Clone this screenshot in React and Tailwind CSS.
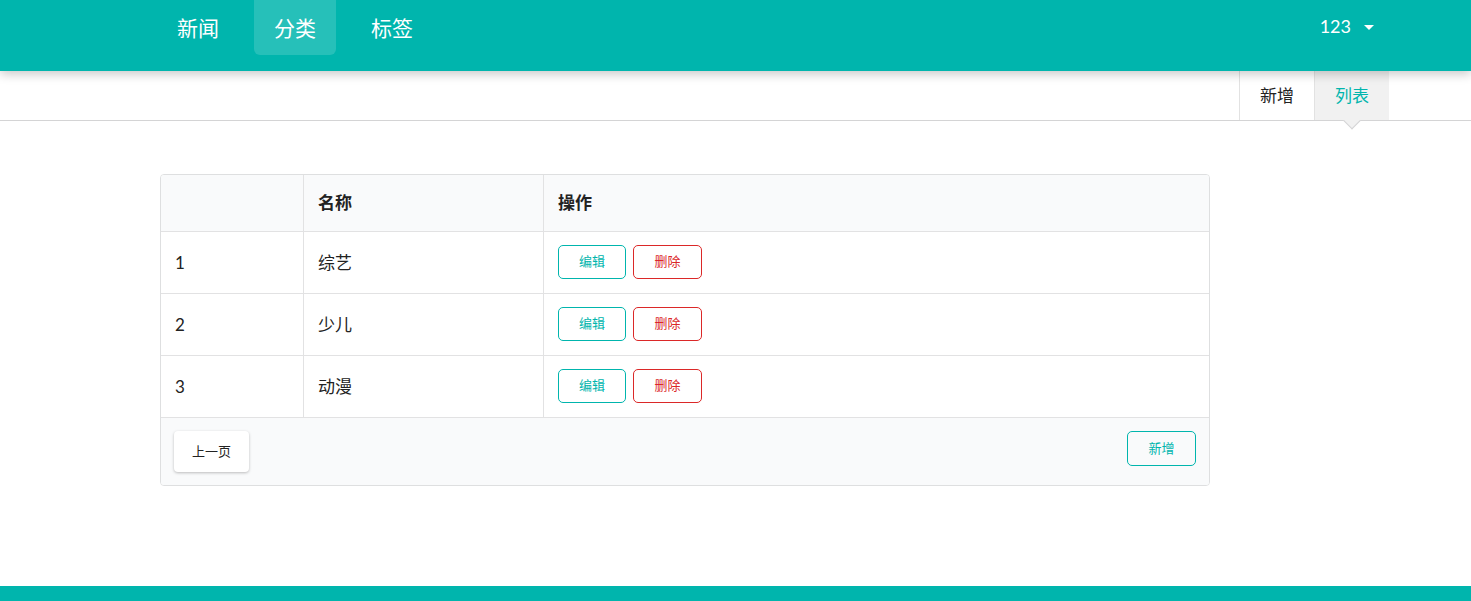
import React from "react";

const font = { fontFamily: 'Lato, "Noto Sans CJK SC", "Helvetica Neue", Arial, sans-serif' };

const rows = [
  { id: 1, name: "综艺" },
  { id: 2, name: "少儿" },
  { id: 3, name: "动漫" },
];

const App = () => {
  return (
    <div className="min-h-[601px] flex flex-col bg-white text-[#222]" style={font}>
      {/* top navbar */}
      <div className="relative z-10 h-[71px] bg-[#00b5ad] shadow-[0_3px_10px_rgba(0,0,0,0.22)] flex items-start">
        <div className="flex gap-[15px] pl-[157px]">
          <a className="w-[82px] h-[55px] flex items-center justify-center text-white text-[21px]">新闻</a>
          <a className="w-[82px] h-[55px] flex items-center justify-center text-white text-[21px] bg-white/15 rounded-b-[6px]">分类</a>
          <a className="w-[82px] h-[55px] flex items-center justify-center text-white text-[21px]">标签</a>
        </div>
        <div className="ml-auto mr-[97px] h-[52px] flex items-center gap-[13px] text-white text-[18px]">
          <span>123</span>
          <span className="w-0 h-0 border-l-[5px] border-r-[5px] border-t-[5px] border-l-transparent border-r-transparent border-t-white mt-[2px]" />
        </div>
      </div>

      {/* secondary menu */}
      <div className="h-[50px] border-b border-[#d4d4d5] flex justify-end pr-[82px]">
        <a className="w-[75px] flex items-center justify-center border-l border-[#e2e2e2] text-[17px] text-[#222]">新增</a>
        <a className="relative w-[75px] flex items-center justify-center bg-[#f1f1f1] border-l border-[#e2e2e2] text-[17px] text-[#00b5ad]">
          列表
          <span className="absolute left-1/2 -bottom-[7px] -ml-[6px] w-[12px] h-[12px] rotate-45 bg-[#f1f1f1] border-r border-b border-[#d4d4d5]" />
        </a>
      </div>

      {/* table */}
      <div className="pl-[160px] mt-[53px]">
        <div className="w-[1050px] border border-[#dedfe0] rounded-[4px] overflow-hidden">
          <div className="grid grid-cols-[143px_240px_1fr] bg-[#f9fafb] h-[57px] border-b border-[#e2e2e3] text-[17px] font-bold">
            <div className="border-r border-[#e2e2e3]" />
            <div className="border-r border-[#e2e2e3] flex items-center pl-[14px]">名称</div>
            <div className="flex items-center pl-[14px]">操作</div>
          </div>
          {rows.map((r) => (
            <div key={r.id} className="grid grid-cols-[143px_240px_1fr] h-[62px] border-b border-[#e2e2e3] text-[17px]">
              <div className="border-r border-[#e2e2e3] flex items-center pl-[14px] text-[17px]">{r.id}</div>
              <div className="border-r border-[#e2e2e3] flex items-center pl-[14px]">{r.name}</div>
              <div className="flex items-center pl-[14px] gap-[7px] pb-[1px]">
                <button className="w-[68px] h-[34px] border border-[#00b5ad] rounded-[5px] text-[13px] text-[#00b5ad] bg-white">编辑</button>
                <button className="w-[69px] h-[34px] border border-[#db2828] rounded-[5px] text-[13px] text-[#db2828] bg-white">删除</button>
              </div>
            </div>
          ))}
          <div className="bg-[#f9fafb] h-[67px] flex items-start justify-between pt-[13px] px-[13px]">
            <button className="w-[75px] h-[41px] bg-white rounded-[4px] shadow-[0_1px_3px_rgba(0,0,0,0.25)] text-[13px] text-[#222]">上一页</button>
            <button className="w-[69px] h-[35px] border border-[#00b5ad] rounded-[5px] text-[13px] text-[#00b5ad] bg-transparent">新增</button>
          </div>
        </div>
      </div>

      <div className="mt-auto h-[15px] bg-[#00b5ad]" />
    </div>
  );
};

export default App;
